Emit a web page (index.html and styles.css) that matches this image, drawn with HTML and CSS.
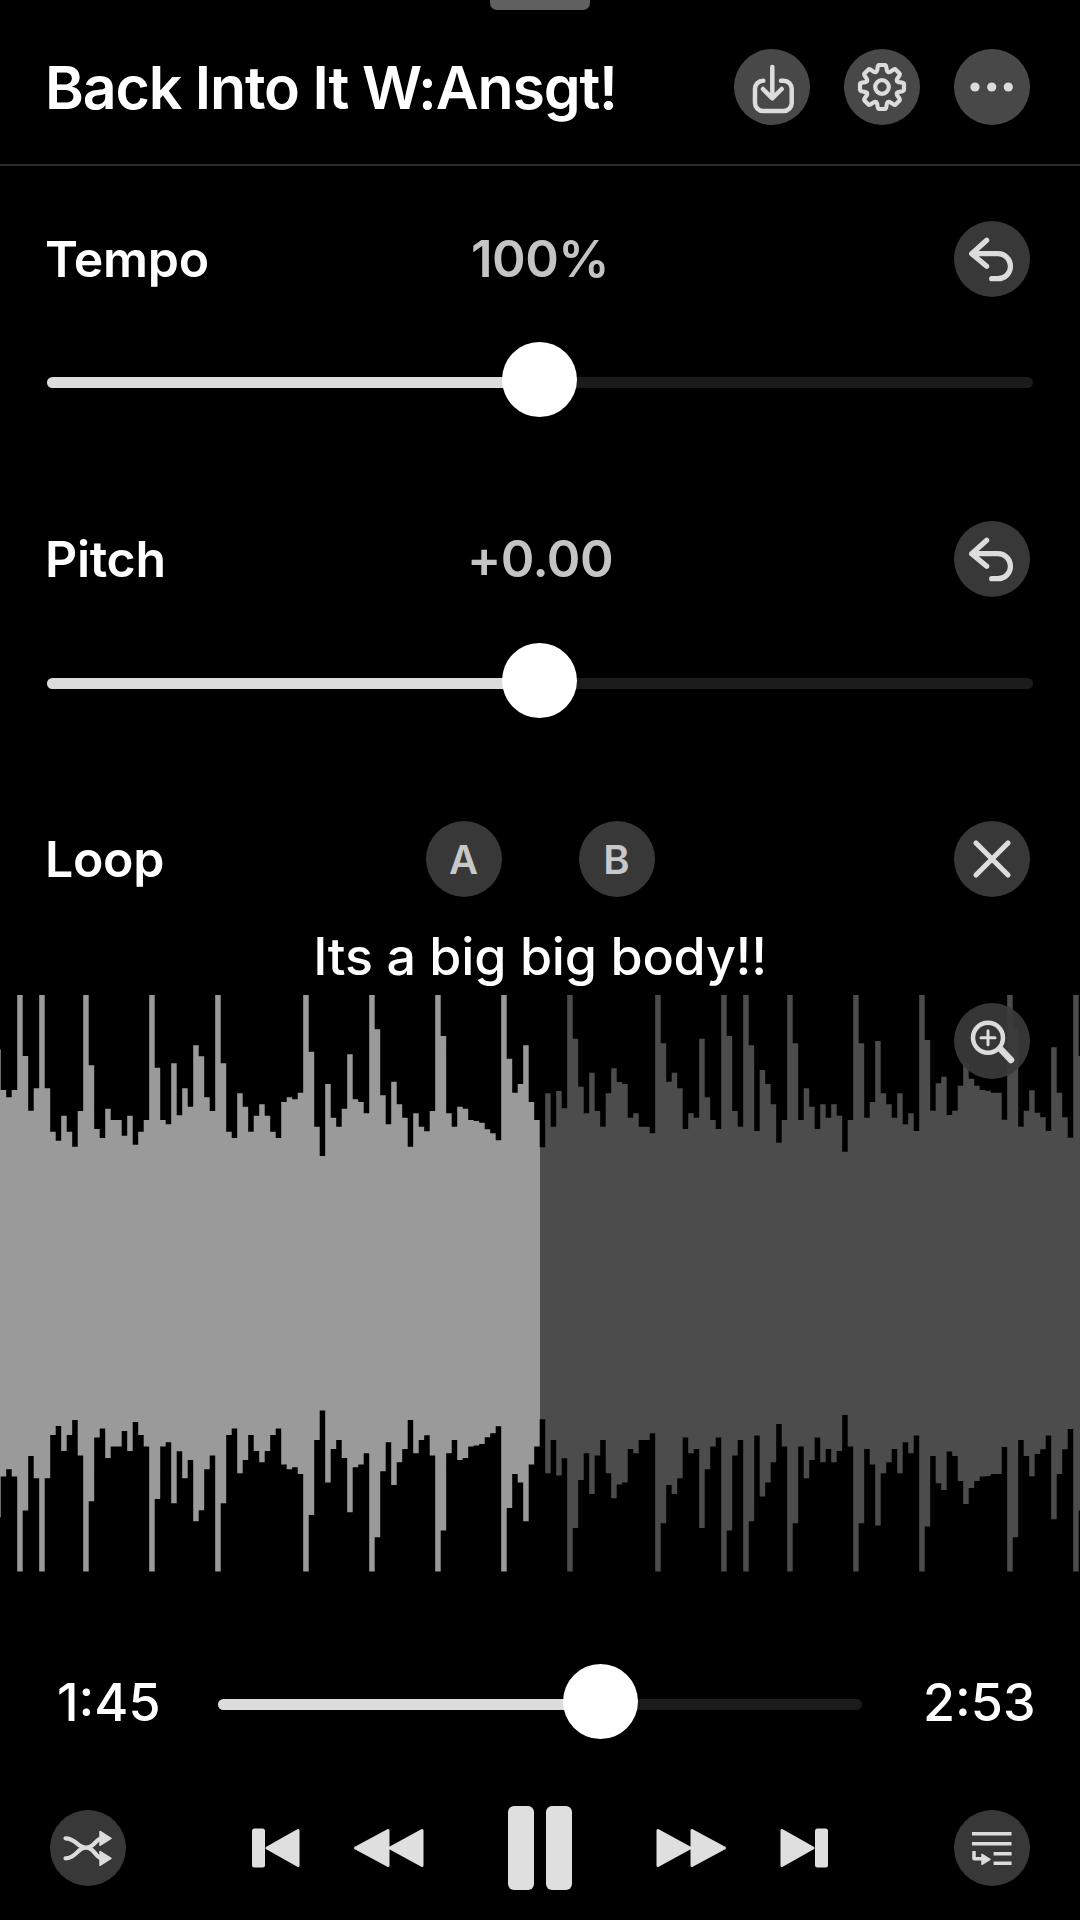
FILE: index.html
```html
<!DOCTYPE html>
<html lang="en">
<head>
    <meta charset="UTF-8">
    <meta name="viewport" content="width=device-width, initial-scale=1.0">
    <title>Back Into It W:Ansgt!</title>
    <link rel="stylesheet" href="styles.css">
</head>
<body>
    <div class="handle"></div>

    <div class="header">
        <div class="title">Back Into It W:Ansgt!</div>
        <div class="header-buttons">
            <button class="round-button light">
                <svg class="icon" viewBox="0 0 76 76">
                    <path d="M38.3 18v30M29 40l9.3 9.3 9.4-9.3"/>
                    <path d="M29.3 31.7H29a8 8 0 0 0-8 8V54a8 8 0 0 0 8 8h20.7a8 8 0 0 0 8-8V39.7a8 8 0 0 0-8-8H47"/>
                </svg>
            </button>
            <button class="round-button light">
                <svg class="icon gear" viewBox="-38 -38 76 76">
                    <defs>
                        <path id="gearTooth" d="M-6.1-15C-3.6-15.6-5.5-22-2.8-22H2.8C5.5-22 3.6-15.6 6.1-15"/>
                    </defs>
                    <use href="#gearTooth"/>
                    <use href="#gearTooth" transform="rotate(45)"/>
                    <use href="#gearTooth" transform="rotate(90)"/>
                    <use href="#gearTooth" transform="rotate(135)"/>
                    <use href="#gearTooth" transform="rotate(180)"/>
                    <use href="#gearTooth" transform="rotate(225)"/>
                    <use href="#gearTooth" transform="rotate(270)"/>
                    <use href="#gearTooth" transform="rotate(315)"/>
                    <circle r="6.8"/>
                </svg>
            </button>
            <button class="round-button light">
                <svg class="icon solid" viewBox="0 0 76 76">
                    <circle cx="21" cy="38" r="4.6"/>
                    <circle cx="37.7" cy="38" r="4.6"/>
                    <circle cx="54.3" cy="38" r="4.6"/>
                </svg>
            </button>
        </div>
    </div>

    <div class="controls">
        <div class="control">
            <div class="control-row">
                <div class="label">Tempo</div>
                <div class="value">100%</div>
                <button class="round-button end">
                    <svg class="icon heavy" viewBox="0 0 76 76">
                        <path d="M32.7 19.3L17.7 32.7l15 12.6M17.7 32.7H44a12.5 12.5 0 0 1 0 25h-6.3"/>
                    </svg>
                </button>
            </div>
            <div class="slider">
                <div class="track"><div class="fill" style="width: 50%"><div class="knob"></div></div></div>
            </div>
        </div>

        <div class="control">
            <div class="control-row">
                <div class="label">Pitch</div>
                <div class="value">+0.00</div>
                <button class="round-button end">
                    <svg class="icon heavy" viewBox="0 0 76 76">
                        <path d="M32.7 19.3L17.7 32.7l15 12.6M17.7 32.7H44a12.5 12.5 0 0 1 0 25h-6.3"/>
                    </svg>
                </button>
            </div>
            <div class="slider">
                <div class="track"><div class="fill" style="width: 50%"><div class="knob"></div></div></div>
            </div>
        </div>

        <div class="control-row">
            <div class="label">Loop</div>
            <div class="loop-points">
                <button class="round-button letter">A</button>
                <button class="round-button letter">B</button>
            </div>
            <button class="round-button end">
                <svg class="icon heavy" viewBox="0 0 76 76">
                    <path d="M22 22l32 32M54 22L22 54"/>
                </svg>
            </button>
        </div>
    </div>

    <div class="lyric">Its a big big body!!</div>

    <div class="waveform">
        <svg class="wave-svg" width="1080" height="577" viewBox="0 0 1080 577">
            <defs>
                <linearGradient id="playedSplit" gradientUnits="userSpaceOnUse" x1="0" y1="0" x2="1080" y2="0">
                    <stop offset="0.5" stop-color="#9a9a9a"/>
                    <stop offset="0.5" stop-color="#4c4c4c"/>
                </linearGradient>
            </defs>
            <path id="wavePath" fill="url(#playedSplit)"/>
        </svg>
        <button class="round-button zoom-button">
            <svg class="icon" viewBox="0 0 76 76">
                <circle cx="34" cy="34.7" r="15"/>
                <path class="thin-line" d="M27 34.7h14M34 27.7v14"/>
                <path class="thick-line" d="M47.5 47l9.5 10"/>
            </svg>
        </button>
    </div>

    <div class="progress">
        <div class="time">1:45</div>
        <div class="slider">
            <div class="track"><div class="fill" style="width: 59.5%"><div class="knob"></div></div></div>
        </div>
        <div class="time time-total">2:53</div>
    </div>

    <div class="transport">
        <button class="round-button">
            <svg class="icon gear" viewBox="0 0 76 76">
                <path d="M15.5 28.3c11 0 11.5 9.4 20.5 9.4s9.5-9.4 16-9.4M15.5 48.3c11 0 11.5-10.6 20.5-10.6s9.5 10.6 16 10.6"/>
                <path class="head" d="M50 21.5L61 28.3l-11 7zM50 41.5l11 6.8-11 7z"/>
            </svg>
        </button>

        <div class="playback">
            <div class="skip-group">
                <svg class="glyph" width="48" height="40" viewBox="0 0 48 40">
                    <rect x="0" y="0.5" width="13" height="39" rx="2.5"/>
                    <path d="M46 2.5V37.5L15 20z"/>
                </svg>
                <svg class="glyph" width="71" height="40" viewBox="0 0 71 40">
                    <path d="M35 2.5V37.5L2.5 20zM69 2.5V37.5L37 20z"/>
                </svg>
            </div>
            <div class="pause">
                <div class="pause-bar"></div>
                <div class="pause-bar"></div>
            </div>
            <div class="skip-group">
                <svg class="glyph" width="71" height="40" viewBox="0 0 71 40">
                    <path d="M2 2.5V37.5L34 20zM36 2.5V37.5L68.5 20z"/>
                </svg>
                <svg class="glyph" width="48" height="40" viewBox="0 0 48 40">
                    <path d="M2 2.5V37.5L33 20z"/>
                    <rect x="35" y="0.5" width="13" height="39" rx="2.5"/>
                </svg>
            </div>
        </div>

        <button class="round-button">
            <svg class="icon queue" viewBox="0 0 76 76">
                <path d="M18 23.7h39.5M18 33.7h39.5M39.6 43.7h18M39.6 53.3h18M20 41v7.7h10"/>
                <path class="head" d="M28 44.3l8 5-8 5z"/>
            </svg>
        </button>
    </div>

    <script src="waveform.js"></script>
</body>
</html>
```

FILE: styles.css
```css
body {
    margin: 0;
    width: 1080px;
    height: 1920px;
    overflow: hidden;
    background-color: #000;
    color: #fff;
    font-family: Inter, "Liberation Sans", sans-serif;
}

button {
    padding: 0;
    border: none;
    font-family: inherit;
}

.handle {
    width: 100px;
    height: 10px;
    margin: 0 auto;
    background-color: #606060;
    border-radius: 0 0 7px 7px;
}

.header {
    display: flex;
    justify-content: space-between;
    align-items: center;
    height: 154px;
    padding: 0 50px 0 45px;
    border-bottom: 2px solid #2a2a2a;
}

.title {
    font-size: 59px;
    font-weight: 600;
    letter-spacing: -1.15px;
}

.header-buttons {
    display: flex;
    gap: 34px;
}

.round-button {
    display: flex;
    align-items: center;
    justify-content: center;
    flex-shrink: 0;
    width: 76px;
    height: 76px;
    border-radius: 50%;
    background-color: #383838;
    color: #d4d4d4;
}

.round-button.light {
    background-color: #484848;
}

.round-button.end {
    justify-self: end;
}

.icon {
    display: block;
    width: 76px;
    height: 76px;
    fill: none;
    stroke: #dcdcdc;
    stroke-width: 4.5;
    stroke-linecap: round;
    stroke-linejoin: round;
}

.icon.gear {
    stroke-width: 4.2;
}

.icon.heavy {
    stroke-width: 5.2;
}

.icon.solid {
    fill: #dcdcdc;
    stroke: none;
}

.icon.queue {
    stroke-width: 3.5;
    stroke-linecap: butt;
}

.icon .head {
    fill: #dcdcdc;
    stroke: #dcdcdc;
    stroke-width: 1.5;
}

.thin-line {
    stroke-width: 3;
}

.thick-line {
    stroke-width: 6.5;
}

.controls {
    display: flex;
    flex-direction: column;
    gap: 103px;
    padding: 55px 50px 0;
}

.control-row {
    display: grid;
    grid-template-columns: 1fr auto 1fr;
    align-items: center;
    height: 76px;
}

.label {
    margin-left: -5px;
    font-size: 50px;
    font-weight: 600;
    letter-spacing: -0.3px;
}

.value {
    margin-top: -2px;
    font-size: 51px;
    font-weight: 600;
    letter-spacing: -0.5px;
    color: #c4c4c4;
}

.loop-points {
    display: flex;
    gap: 77px;
}

.letter {
    font-size: 40px;
    font-weight: 600;
    color: #c8c8c8;
}

.slider {
    height: 76px;
    padding-top: 35px;
    box-sizing: border-box;
}

.control .slider {
    margin: 45px -3px 0;
}

.control + .control .slider {
    margin: 46px -3px -1px;
}

.track {
    height: 11px;
    border-radius: 6px;
    background-color: #1b1b1b;
}

.fill {
    position: relative;
    height: 100%;
    border-radius: 6px;
    background-color: #dcdcdc;
}

.knob {
    position: absolute;
    top: -35px;
    right: -37px;
    width: 75px;
    height: 75px;
    border-radius: 50%;
    background-color: #fff;
}

.lyric {
    height: 60px;
    margin: 30px 0 8px;
    font-size: 52px;
    font-weight: 500;
    letter-spacing: -0.2px;
    line-height: 60px;
    text-align: center;
}

.waveform {
    position: relative;
    height: 577px;
}

.wave-svg {
    display: block;
}

.zoom-button {
    position: absolute;
    top: 8px;
    right: 50px;
    background-color: rgba(58, 58, 58, 0.93);
}

.progress {
    display: grid;
    grid-template-columns: 218px 644px 1fr;
    align-items: center;
    height: 76px;
    margin-top: 92px;
}

.time {
    padding-left: 57px;
    font-size: 52px;
    font-weight: 500;
}

.time-total {
    padding-left: 61px;
}

.transport {
    display: flex;
    justify-content: space-between;
    align-items: center;
    height: 84px;
    margin-top: 66px;
    padding: 0 50px;
}

.playback {
    display: flex;
    justify-content: space-between;
    align-items: center;
    width: 576px;
}

.skip-group {
    display: flex;
    align-items: center;
    gap: 53px;
}

.glyph {
    display: block;
    fill: #dfdfdf;
    stroke: #dfdfdf;
    stroke-width: 3;
    stroke-linejoin: round;
}

.glyph rect {
    stroke: none;
}

.pause {
    display: flex;
    gap: 12px;
}

.pause-bar {
    width: 26px;
    height: 84px;
    border-radius: 6px;
    background-color: #dfdfdf;
}
```

FILE: waveform.js
```js
// distance from the top of the waveform to the top of each bar, in thirds of a pixel
// the bottom edge is the same shape mirrored around the middle
const barTops = [
    163,
    285, 307, 285, 0, 183, 347, 280, 0, 280, 410, 437, 362, 410, 455, 348, 0,
    211, 402, 429, 341, 375, 375, 422, 362, 449, 410, 375, 0, 218, 375, 388, 205,
    361, 280, 335, 151, 184, 307, 348, 0, 205, 410, 429, 295, 335, 410, 362, 328,
    362, 410, 429, 321, 307, 313, 293, 0, 170, 395, 483, 267, 368, 395, 341, 178,
    313, 321, 355, 0, 103, 301, 388, 260, 328, 368, 455, 355, 395, 409, 348, 0,
    123, 355, 395, 335, 341, 375, 378, 383, 403, 415, 436, 0, 191, 293, 267, 151,
    321, 375, 457,
    295, 395, 288, 340, 0,
    131, 275, 355, 233, 348, 395, 295, 220, 261, 267, 368, 355, 395, 395, 415, 0,
    145, 260, 233, 280, 402, 355, 368, 131, 307, 375, 402, 0,
    123, 348, 395, 0,
    151, 408, 225, 267, 328, 443, 375, 0,
    145, 375, 280, 335, 402, 328, 368, 328, 362, 470, 375, 0,
    145, 368, 321, 138, 295, 328, 368, 295, 388, 355, 408, 0,
    135, 347, 265, 245, 360, 347, 272, 203, 251, 272, 285, 287, 293, 293, 374, 0,
    103, 395, 347, 286, 353, 367, 408, 157, 293, 367, 428, 0, 183
];

const barStep = 5.5;
const firstBarX = -4.8;
const middleY = 288.3;

let topEdge = "";
let bottomEdge = "";

barTops.forEach(function (value, index) {
    const y = value / 3;
    const x1 = (firstBarX + index * barStep).toFixed(1);
    const x2 = (firstBarX + (index + 1) * barStep).toFixed(1);
    const mirrored = (middleY * 2 - y).toFixed(1);
    topEdge += (index === 0 ? "M" : "L") + x1 + " " + y.toFixed(1) + "L" + x2 + " " + y.toFixed(1);
    bottomEdge = "L" + x2 + " " + mirrored + "L" + x1 + " " + mirrored + bottomEdge;
});

document.getElementById("wavePath").setAttribute("d", topEdge + bottomEdge + "Z");
```
